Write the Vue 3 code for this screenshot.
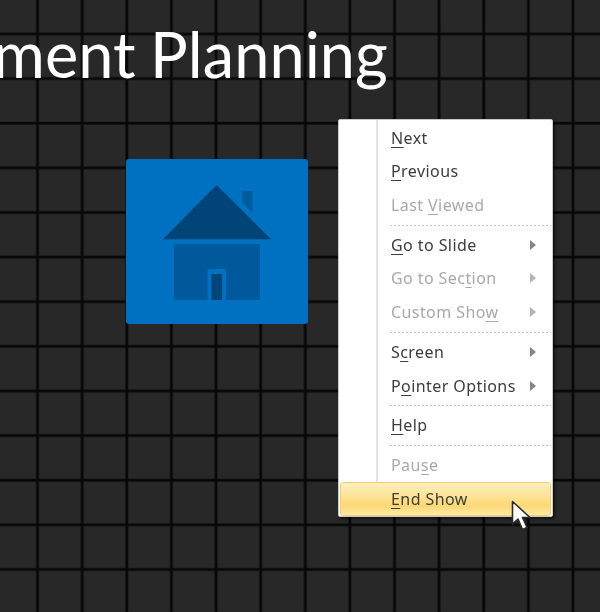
<script setup>
const groups = [
  [
    { pre: '', key: 'N', post: 'ext' },
    { pre: '', key: 'P', post: 'revious' },
    { pre: 'Last ', key: 'V', post: 'iewed', off: true },
  ],
  [
    { pre: '', key: 'G', post: 'o to Slide', sub: true },
    { pre: 'Go to Sec', key: 't', post: 'ion', off: true, sub: true },
    { pre: 'Custom Sho', key: 'w', post: '', off: true, sub: true },
  ],
  [
    { pre: 'S', key: 'c', post: 'reen', sub: true },
    { pre: 'P', key: 'o', post: 'inter Options', sub: true },
  ],
  [{ pre: '', key: 'H', post: 'elp' }],
  [
    { pre: 'Pau', key: 's', post: 'e', off: true },
    { pre: '', key: 'E', post: 'nd Show', active: true },
  ],
]
</script>

<template>
  <div class="stage">
    <h1 class="title">ment Planning</h1>

    <div class="tile">
      <svg class="house" width="182" height="165" viewBox="0 0 182 165">
        <path class="chimney" d="M116 32h10.500v22l-10.500-11z" />
        <path class="roof" d="M90.500 26L37 80.300h108z" />
        <path class="body" d="M48 85h86v56H48z" />
        <path class="frame" d="M81.500 141v-29a2 2 0 0 1 2-2h14.500a2 2 0 0 1 2 2v29z" />
        <path class="roof" d="M85.500 141v-26h10.500v26z" />
      </svg>
    </div>

    <div class="menu">
      <template v-for="(group, g) in groups" :key="g">
        <div v-if="g > 0" class="sep"></div>
        <div
          v-for="item in group"
          :key="item.pre + item.key"
          class="row"
          :class="{ off: item.off, active: item.active }"
        >
          <span class="label">{{ item.pre }}<u>{{ item.key }}</u>{{ item.post }}</span>
          <span v-if="item.sub" class="arrow"></span>
        </div>
      </template>
    </div>

    <svg class="cursor" width="22" height="32" viewBox="0 0 22 32">
      <path d="M1.500 1.500V24l5.500-5 4.500 10.500 4.500-2-4.500-10h7.500z" fill="#fff" stroke="#2b2b2b" stroke-width="1.600" stroke-linejoin="round" />
    </svg>
  </div>
</template>

<style scoped>
.stage {
  position: relative;
  width: 600px;
  height: 612px;
  overflow: hidden;
  background-color: #282828;
  background-image:
    linear-gradient(90deg, transparent 0, transparent 35.500px, #070707 36.800px, #070707 38.200px, transparent 39.500px),
    linear-gradient(180deg, transparent 0, transparent 32px, #070707 33.300px, #070707 34.700px, transparent 36px);
  background-size: 44.640px 100%, 100% 44.640px;
  background-position: 0 0, 0 0;
}
.title {
  margin: 0 0 0 -7px;
  padding-top: 14px;
  font-family: "Lato", "Open Sans", sans-serif;
  font-size: 63px;
  line-height: 80px;
  font-weight: 400;
  word-spacing: -2px;
  letter-spacing: 0.1px;
  color: #fff;
  white-space: nowrap;
  filter: blur(0.5px);
}
.tile {
  position: absolute;
  left: 126px;
  top: 159px;
  width: 182px;
  height: 165px;
  border-radius: 3px;
  background: #0070c0;
  filter: blur(0.4px);
}
.house { display: block; }
.chimney { fill: #005a9e; }
.roof { fill: #004478; }
.body { fill: #00599b; }
.frame { fill: #0070c0; }

.menu {
  position: absolute;
  left: 338px;
  top: 119px;
  width: 215px;
  height: 398px;
  box-sizing: border-box;
  padding: 1px;
  background: linear-gradient(90deg, transparent 37px, #e3e4e4 37px, #e3e4e4 39px, transparent 39px), #fff;
  border: 1px solid #c9c9c9;
  border-radius: 2px;
  box-shadow: 2px 2px 3px rgba(0, 0, 0, 0.55);
  font-family: "Noto Sans", "Open Sans", sans-serif;
  font-size: 16px;
  letter-spacing: 0.42px;
  color: #3c3c3c;
}
.row {
  display: flex;
  align-items: center;
  justify-content: space-between;
  box-sizing: border-box;
  height: 33.600px;
  padding: 0 15px 0 51px;
}
.label {
  white-space: nowrap;
  filter: blur(0.4px);
}
.row u {
  text-underline-offset: 2.500px;
  text-decoration-thickness: 1px;
}
.off { color: #a9a9a9; }
.arrow {
  width: 0;
  height: 0;
  border-style: solid;
  border-width: 5px 0 5px 6px;
  border-color: transparent transparent transparent #858585;
}
.off .arrow { border-left-color: #b4b4b4; }
.sep {
  height: 1px;
  margin: 2.800px 0 2.500px 50px;
  background-image: linear-gradient(90deg, #c4c4c4 50%, transparent 50%);
  background-size: 4px 1px;
}
.active {
  margin-top: 0;
  height: 34px;
  border: 1px solid #f4cd6e;
  border-radius: 3px;
  padding-left: 50px;
  background: linear-gradient(180deg, #fdefbe 0%, #fde59c 35%, #fbd873 72%, #fde9a8 100%);
}
.cursor {
  position: absolute;
  left: 511px;
  top: 500px;
  filter: blur(0.3px);
}
</style>
